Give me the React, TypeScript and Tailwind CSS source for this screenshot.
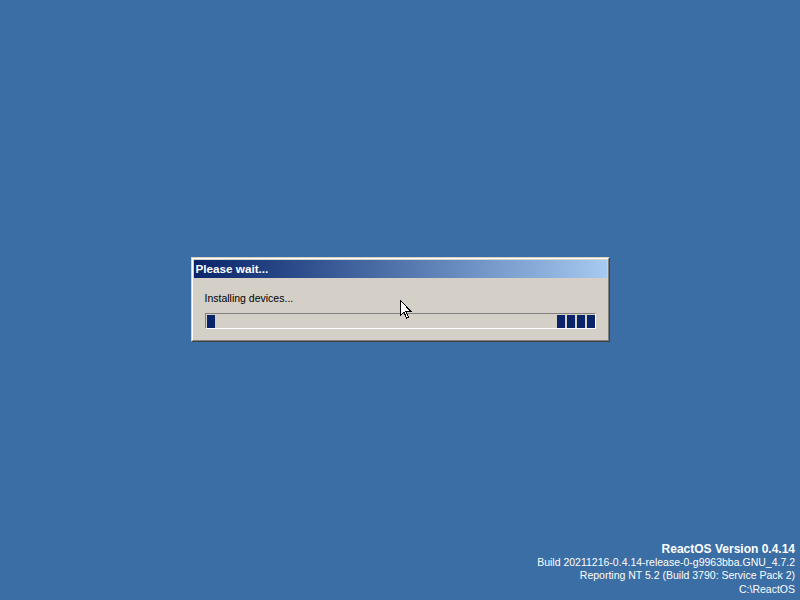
export default function App() {
  return (
    <div className="relative h-[600px] w-[800px] overflow-hidden bg-[#3a6ea5] font-['Liberation_Sans',Arial,sans-serif] text-[10.5px]">
      <div className="flex h-full items-center justify-center pb-px">
        <div className="w-[419px] border border-t-[#d4d0c8] border-l-[#d4d0c8] border-r-[#404040] border-b-[#404040] bg-[#d4d0c8]">
          <div className="border border-t-white border-l-white border-r-[#808080] border-b-[#808080] p-px">
            <div className="flex h-[18px] items-center bg-gradient-to-r from-[#0a246a] to-[#a6caf0] pl-[2px] text-[11.7px] font-bold text-white">
              Please wait...
            </div>
            <div className="px-[11px] pt-[14px] pb-[10px]">
              <div className="leading-[13px] text-black">Installing devices...</div>
              <div className="mt-[8px] flex h-[16px] justify-between border border-t-[#808080] border-l-[#808080] border-r-white border-b-white pl-px pt-px">
                <div className="h-full w-[8px] bg-[#0a246a]" />
                <div className="flex gap-[2px]">
                  <div className="h-full w-[8px] bg-[#0a246a]" />
                  <div className="h-full w-[8px] bg-[#0a246a]" />
                  <div className="h-full w-[8px] bg-[#0a246a]" />
                  <div className="h-full w-[8px] bg-[#0a246a]" />
                </div>
              </div>
            </div>
          </div>
        </div>
      </div>

      <svg className="absolute left-[400px] top-[300px]" width="12" height="19" viewBox="0 0 12 19">
        <path d="M0.5 0.5 L0.5 15.5 L4 12 L6.5 18 L8.5 17 L6 11.5 L11 11.5 Z" fill="white" stroke="black" strokeWidth="1" shapeRendering="crispEdges" />
      </svg>

      <div className="absolute right-[5px] bottom-[4px] text-right leading-[13.3px] text-white">
        <div className="text-[12px] font-bold">ReactOS Version 0.4.14</div>
        <div>Build 20211216-0.4.14-release-0-g9963bba.GNU_4.7.2</div>
        <div>Reporting NT 5.2 (Build 3790: Service Pack 2)</div>
        <div>C:\ReactOS</div>
      </div>
    </div>
  );
}
